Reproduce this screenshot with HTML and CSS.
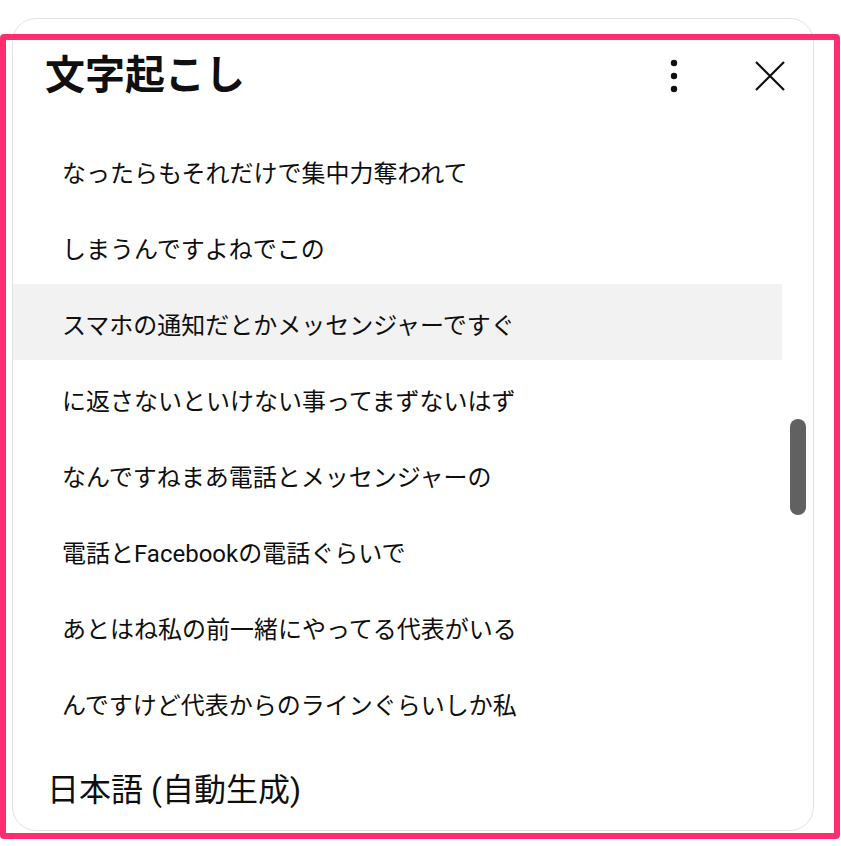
FILE: index.html
```html
<!DOCTYPE html>
<html>
    <head>
        <title>文字起こし</title>
        <meta charset="UTF-8">
        <meta name="viewport" content="width=device-width, initial-scale=1.0">
        <link rel="stylesheet" href="styles.css">
    </head>
    <body>

        <div class="panel">
            <div class="panel-head">
                <h2 class="panel-title">文字起こし</h2>
                <button class="icon-btn kebab" title="その他の操作">
                    <svg width="48" height="48" viewBox="0 0 48 48">
                        <circle cx="24" cy="11" r="3.2"/>
                        <circle cx="24" cy="24" r="3.2"/>
                        <circle cx="24" cy="37" r="3.2"/>
                    </svg>
                </button>
                <button class="icon-btn close" title="閉じる">
                    <svg width="48" height="48" viewBox="0 0 48 48">
                        <path d="M10 10 L38 38 M38 10 L10 38" stroke="#0f0f0f" stroke-width="2.2" fill="none"/>
                    </svg>
                </button>
            </div>

            <div class="panel-body">
                <ul class="lines">
                    <li class="line">なったらもそれだけで集中力奪われて</li>
                    <li class="line">しまうんですよねでこの</li>
                    <li class="line active">スマホの通知だとかメッセンジャーですぐ</li>
                    <li class="line">に返さないといけない事ってまずないはず</li>
                    <li class="line">なんですねまあ電話とメッセンジャーの</li>
                    <li class="line">電話とFacebookの電話ぐらいで</li>
                    <li class="line">あとはね私の前一緒にやってる代表がいる</li>
                    <li class="line">んですけど代表からのラインぐらいしか私</li>
                </ul>
                <div class="track">
                    <div class="thumb"></div>
                </div>
            </div>

            <div class="panel-foot">日本語 (自動生成)</div>
        </div>

        <!-- annotation frame -->
        <div class="highlight-frame"></div>

    </body>
</html>
```

FILE: styles.css
```css
* { box-sizing: border-box; }

body {
    margin: 0;
    background: white;
    font-family: Roboto, "Noto Sans CJK JP", sans-serif;
    color: #0f0f0f;
}

.panel {
    margin: 18px 0 0 12px;
    width: 802px;
    height: 813px;
    border: 1px solid #e3e3e3;
    border-radius: 24px;
    overflow: hidden;
    display: flex;
    flex-direction: column;
}

.panel-head {
    display: flex;
    align-items: center;
    height: 113px;
    flex: none;
    padding: 0 19px 0 32px;
}

.panel-title {
    margin: 0;
    font-size: 40px;
    font-weight: 700;
    line-height: 48px;
    flex: 1;
}

.icon-btn {
    width: 48px;
    height: 48px;
    padding: 0;
    border: none;
    background: none;
    display: flex;
}

.icon-btn.kebab { margin-right: 48px; }
.icon-btn.kebab svg { fill: #0f0f0f; }

.panel-body {
    display: flex;
    height: 608px;
    flex: none;
    overflow: hidden;
}

.lines {
    list-style: none;
    margin: 0;
    padding: 0;
    width: 769px;
    flex: none;
}

.line {
    height: 76px;
    display: flex;
    align-items: center;
    padding: 2px 0 0 49px;
    font-size: 24px;
    white-space: nowrap;
}

.line.active { background: #f2f2f2; }

.track {
    flex: none;
    width: 16px;
    margin-left: 8px;
    padding-top: 287px;
}

.thumb {
    height: 96px;
    border-radius: 8px;
    background: #616161;
}

.panel-foot {
    padding: 30px 0 0 34px;
    font-size: 32px;
    line-height: 40px;
}

.highlight-frame {
    position: absolute;
    left: 0;
    top: 34px;
    width: 840px;
    height: 805px;
    border: 6px solid #fe2f6e;
    border-radius: 4px;
    pointer-events: none;
}
```
